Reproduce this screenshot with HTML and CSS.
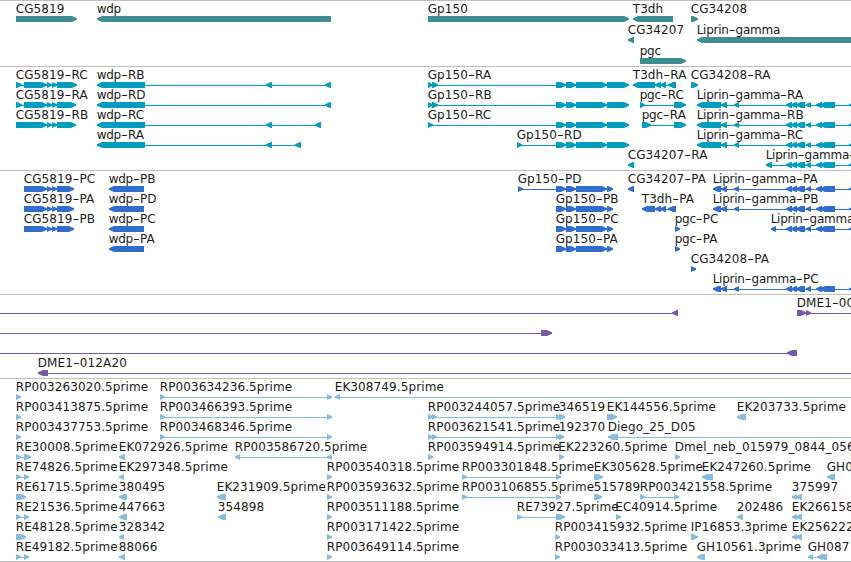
FILE: index.html
```html
<!DOCTYPE html>
<html lang="en">
<head>
  <meta charset="UTF-8" />
  <title>Genome tracks</title>
  <link rel="stylesheet" href="styles.css">
</head>
<body>
  <div class="browser">
    <div class="track genes" id="genes"></div>
    <div class="track transcripts" id="transcripts"></div>
    <div class="track proteins" id="proteins"></div>
    <div class="track clones" id="clones"></div>
    <div class="track ests" id="ests"></div>
  </div>
  <script src="tracks.js"></script>
</body>
</html>
```

FILE: styles.css
```css
body {
  margin: 0;
  background: #ffffff;
  overflow: hidden;
}
.browser {
  display: flex;
  flex-direction: column;
  width: 851px;
  border-bottom: 1px solid #bebebe;
}
.track {
  box-sizing: border-box;
  border-top: 1px solid #bebebe;
}
.row {
  display: block;
  width: 851px;
  height: 20px;
  overflow: visible;
}
.row text {
  font-family: "DejaVu Sans", sans-serif;
  font-size: 12px;
  letter-spacing: 0.11px;
  fill: #1a1a1a;
}
.row .name {
  letter-spacing: -0.25px;
}
.row path {
  fill: currentColor;
}
.genes {
  height: 66px;
  color: #3d8d93;
}
.genes .row {
  height: 21px;
}
.transcripts {
  height: 104px;
  color: #009dbf;
}
.proteins {
  height: 124px;
  color: #306dcc;
}
.clones {
  height: 84px;
  color: #7659a8;
}
.ests {
  height: 183px;
  color: #87bcde;
}
```

FILE: tracks.js
```js
// feature: [label, label x, direction, blocks, line start, line end]
const cg = [[24, 47], [47, 52], [52, 57]];
const gp = [[556, 566], [566, 576], [576, 607]];
const lipTail = [[786, 792], [791, 797], [796, 805], [806, 811], [816, 822], [820, 835], [849, 856]];
const lipR = [[697, 721], [721, 727], [734, 739], ...lipTail];
const lipP = [[713, 721], [721, 727], [734, 739], ...lipTail];

const tracks = {
  genes: [
    [["CG5819", 16, ">", [[16, 77]]], ["wdp", 97, "<", [[97, 331]]], ["Gp150", 428, ">", [[428, 629]]],
     ["T3dh", 633, "<", [[633, 673]]], ["CG34208", 691, ">", [[691, 698]]]],
    [["CG34207", 628, "<", [[628, 634]]], ["Liprin-gamma", 697, "<", [[697, 860]]]],
    [["pgc", 640, ">", [[640, 686]]]]
  ],
  transcripts: [
    [["CG5819-RC", 16, ">", [[16, 22], ...cg, [57, 77]]],
     ["wdp-RB", 97, "<", [[97, 145], [266, 272], [325, 331]]],
     ["Gp150-RA", 428, ">", [[428, 433], [432, 438], ...gp, [607, 629]]],
     ["T3dh-RA", 633, "<", [[633, 655], [655, 661], [660, 666], [668, 676]]],
     ["CG34208-RA", 691, ">", [[691, 698]]]],
    [["CG5819-RA", 16, ">", [[16, 22], ...cg, [57, 76]]],
     ["wdp-RD", 97, "<", [[97, 145], [325, 331]]],
     ["Gp150-RB", 428, ">", [[428, 433], [432, 438], ...gp, [607, 629]]],
     ["pgc-RC", 640, ">", [[640, 645], [674, 686]]],
     ["Liprin-gamma-RA", 697, "<", lipR]],
    [["CG5819-RB", 16, ">", [[16, 47], [47, 52], [52, 57], [57, 76]]],
     ["wdp-RC", 97, "<", [[97, 145], [266, 272], [315, 321]]],
     ["Gp150-RC", 428, ">", [[428, 433], ...gp, [607, 629]]],
     ["pgc-RA", 642, ">", [[642, 651], [674, 686]]],
     ["Liprin-gamma-RB", 697, "<", lipR]],
    [["wdp-RA", 97, "<", [[97, 145], [266, 272], [295, 301]]],
     ["Gp150-RD", 517, ">", [[517, 522], ...gp, [607, 629]]],
     ["Liprin-gamma-RC", 697, "<", lipR]],
    [["CG34207-RA", 628, "<", [[628, 634]]],
     ["Liprin-gamma-", 766, "<", [[766, 772], ...lipTail]]]
  ],
  proteins: [
    [["CG5819-PC", 24, ">", [...cg, [57, 74]]], ["wdp-PB", 109, "<", [[109, 144]]],
     ["Gp150-PD", 518, ">", [[518, 523], ...gp, [607, 613]]],
     ["CG34207-PA", 628, "<", [[628, 634]]], ["Liprin-gamma-PA", 713, "<", lipP]],
    [["CG5819-PA", 24, ">", [...cg, [57, 74]]], ["wdp-PD", 109, "<", [[109, 144]]],
     ["Gp150-PB", 556, ">", [...gp, [607, 613]]],
     ["T3dh-PA", 642, "<", [[642, 655], [655, 661], [660, 666], [668, 676]]],
     ["Liprin-gamma-PB", 713, "<", lipP]],
    [["CG5819-PB", 24, ">", [...cg, [57, 74]]], ["wdp-PC", 109, "<", [[109, 144]]],
     ["Gp150-PC", 556, ">", [...gp, [607, 613]]],
     ["pgc-PC", 675, ">", [[675, 680]]],
     ["Liprin-gamma", 771, "<", [[771, 776], ...lipTail]]],
    [["wdp-PA", 109, "<", [[109, 144]]],
     ["Gp150-PA", 556, ">", [...gp, [607, 613]]], ["pgc-PA", 675, ">", [[675, 680]]]],
    [["CG34208-PA", 691, ">", [[691, 696]]]],
    [["Liprin-gamma-PC", 713, "<", lipP]]
  ],
  clones: [
    [["", 0, "<", [[672, 678]], 0, 678], ["DME1-00", 797, ">", [[797, 806], [806, 811]], 797, 851]],
    [["", 0, ">", [[541, 552]], 0, 552]],
    [["", 0, "<", [[787, 797]], 0, 797]],
    [["DME1-012A20", 38, "<", [[38, 48]], 38, 851]]
  ],
  ests: [
    [["RP003263020.5prime", 16, ">", [[16, 21]]], ["RP003634236.5prime", 160, ">", [[160, 165], [327, 332]]],
     ["EK308749.5prime", 335, "<", [[335, 340]], 335, 851]],
    [["RP003413875.5prime", 16, ">", [[16, 21]]], ["RP003466393.5prime", 160, ">", [[160, 165], [327, 332]]],
     ["RP003244057.5prime", 428, ">", [[428, 433], [432, 437], [556, 561], [559, 565]]],
     ["346519", 559, ">", [[559, 565]]], ["EK144556.5prime", 607, ">", [[607, 617]]],
     ["EK203733.5prime", 737, "<", [[737, 746]]]],
    [["RP003437753.5prime", 16, ">", [[16, 21]]], ["RP003468346.5prime", 160, ">", [[160, 165], [327, 332]]],
     ["RP003621541.5prime", 428, ">", [[428, 433], [432, 437], [556, 561], [559, 564]]],
     ["192370", 559, ">", [[559, 564]]], ["Diego_25_D05", 608, "<", [[608, 618]], 608, 851]],
    [["RE30008.5prime", 16, ">", [[16, 21], [24, 31]]], ["EK072926.5prime", 119, "<", [[119, 125]]],
     ["RP003586720.5prime", 235, "<", [[235, 240], [327, 332]]], ["RP003594914.5prime", 428, ">", [[428, 433]]],
     ["EK223260.5prime", 558.5, ">", [[559, 564]]], ["Dmel_neb_015979_0844_056", 675, ">", [[675, 680]]]],
    [["RE74826.5prime", 16, ">", [[16, 21], [24, 29]]], ["EK297348.5prime", 119, "<", [[119, 124]]],
     ["RP003540318.5prime", 327, ">", [[327, 332]]], ["RP003301848.5prime", 462, ">", [[462, 467], [556, 561]]],
     ["EK305628.5prime", 594, ">", [[594, 603]]], ["EK247260.5prime", 702, "<", [[702, 713]]],
     ["GH0", 827, "<", [[827, 835]]]],
    [["RE61715.5prime", 16, ">", [[16, 26]]], ["380495", 119, "<", [[119, 127]]],
     ["EK231909.5prime", 217, "<", [[217, 226]]], ["RP003593632.5prime", 327, ">", [[327, 332]]],
     ["RP003106855.5prime", 462, ">", [[462, 467], [556, 561]]], ["515789", 594, ">", [[594, 602]]],
     ["RP003421558.5prime", 640, ">", [[640, 645], [674, 679]]], ["375997", 792, "<", [[792, 797], [796, 802]]]],
    [["RE21536.5prime", 16, ">", [[16, 21], [24, 29]]], ["447663", 119, "<", [[119, 127]]],
     ["354898", 218, "<", [[218, 226]]], ["RP003511188.5prime", 327, ">", [[327, 332]]],
     ["RE73927.5prime", 517, ">", [[517, 522], [556, 565]]], ["EC40914.5prime", 615.5, ">", [[616, 621]]],
     ["202486", 737, "<", [[737, 743]]], ["EK266158", 792, "<", [[792, 797], [796, 802]]]],
    [["RE48128.5prime", 16, ">", [[16, 26]]], ["328342", 119, "<", [[119, 124]]],
     ["RP003171422.5prime", 327, ">", [[327, 332]]], ["RP003415932.5prime", 555, ">", [[555, 560]]],
     ["IP16853.3prime", 691, ">", [[691, 698]]], ["EK256222", 792, "<", [[792, 797], [796, 802]]]],
    [["RE49182.5prime", 16, ">", [[16, 21], [24, 29]]], ["88066", 119, "<", [[119, 125]]],
     ["RP003649114.5prime", 327, ">", [[327, 332]]], ["RP003033413.5prime", 555, ">", [[555, 560]]],
     ["GH10561.3prime", 697, "<", [[697, 705]]], ["GH087", 808, "<", [[808, 813], [817, 823], [820, 827]]]]
  ]
};

function block(x1, x2, dir) {
  const head = Math.min(5, x2 - x1);
  if (dir === ">") {
    return `M${x1} 15H${x2 - head}L${x2} 17.3V18.7L${x2 - head} 21H${x1}Z`;
  }
  return `M${x2} 15H${x1 + head}L${x1} 17.3V18.7L${x1 + head} 21H${x2}Z`;
}

function labelText(label) {
  return label
    .replace(/Liprin|gamma|wdp|pgc/g, '<tspan class="name">$&</tspan>')
    .replace(/-/g, '<tspan textLength="6.9" lengthAdjust="spacingAndGlyphs">-</tspan>');
}

function feature([label, x, dir, blocks, from, to]) {
  const start = from ?? blocks[0][0];
  const end = to ?? blocks[blocks.length - 1][1];
  const line = blocks.length > 1 || to ? `M${start} 18H${end}V19H${start}Z` : "";
  const shapes = [line, ...blocks.map(b => block(b[0], b[1], dir))].filter(Boolean);
  return shapes.map(d => `<path d="${d}"/>`).join("") +
    (label ? `<text x="${x - 0.3}" y="12">${labelText(label)}</text>` : "");
}

for (const id in tracks) {
  document.getElementById(id).innerHTML = tracks[id]
    .map(row => `<svg class="row">${row.map(feature).join("")}</svg>`)
    .join("");
}
```
